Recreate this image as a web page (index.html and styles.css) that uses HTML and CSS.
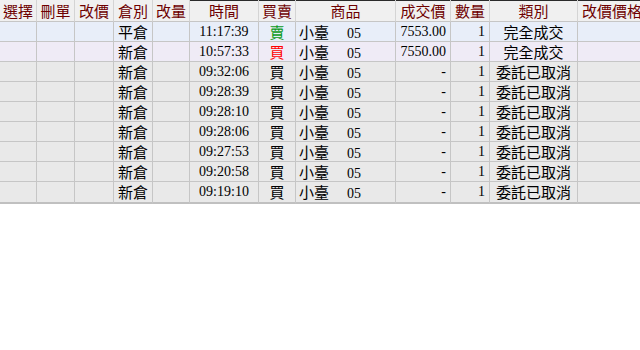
FILE: index.html
```html
<!DOCTYPE html>
<html lang="zh-Hant">
<head>
<meta charset="utf-8">
<title>委託回報</title>
<link rel="stylesheet" href="styles.css">
</head>
<body>
<div class="grid">
  <div class="row head">
    <div class="c">選擇</div><div class="c">刪單</div><div class="c">改價</div><div class="c">倉別</div><div class="c">改量</div>
    <div class="c dark">時間</div><div class="c dark">買賣</div><div class="c dark">商品</div><div class="c dark">成交價</div><div class="c dark">數量</div><div class="c dark">類別</div><div class="c dark left">改價價格</div>
  </div>
  <div class="row r-blue">
    <div class="c"></div><div class="c"></div><div class="c"></div><div class="c">平倉</div><div class="c"></div>
    <div class="c num">11:17:39</div><div class="c sell">賣</div><div class="c prod"><span class="pn">小臺</span><span class="num">05</span></div><div class="c num right">7553.00</div><div class="c num right">1</div><div class="c">完全成交</div><div class="c"></div>
  </div>
  <div class="row r-lav">
    <div class="c"></div><div class="c"></div><div class="c"></div><div class="c">新倉</div><div class="c"></div>
    <div class="c num">10:57:33</div><div class="c buy">買</div><div class="c prod"><span class="pn">小臺</span><span class="num">05</span></div><div class="c num right">7550.00</div><div class="c num right">1</div><div class="c">完全成交</div><div class="c"></div>
  </div>
  <div class="row">
    <div class="c"></div><div class="c"></div><div class="c"></div><div class="c">新倉</div><div class="c"></div>
    <div class="c num">09:32:06</div><div class="c">買</div><div class="c prod"><span class="pn">小臺</span><span class="num">05</span></div><div class="c num right">-</div><div class="c num right">1</div><div class="c">委託已取消</div><div class="c"></div>
  </div>
  <div class="row">
    <div class="c"></div><div class="c"></div><div class="c"></div><div class="c">新倉</div><div class="c"></div>
    <div class="c num">09:28:39</div><div class="c">買</div><div class="c prod"><span class="pn">小臺</span><span class="num">05</span></div><div class="c num right">-</div><div class="c num right">1</div><div class="c">委託已取消</div><div class="c"></div>
  </div>
  <div class="row">
    <div class="c"></div><div class="c"></div><div class="c"></div><div class="c">新倉</div><div class="c"></div>
    <div class="c num">09:28:10</div><div class="c">買</div><div class="c prod"><span class="pn">小臺</span><span class="num">05</span></div><div class="c num right">-</div><div class="c num right">1</div><div class="c">委託已取消</div><div class="c"></div>
  </div>
  <div class="row">
    <div class="c"></div><div class="c"></div><div class="c"></div><div class="c">新倉</div><div class="c"></div>
    <div class="c num">09:28:06</div><div class="c">買</div><div class="c prod"><span class="pn">小臺</span><span class="num">05</span></div><div class="c num right">-</div><div class="c num right">1</div><div class="c">委託已取消</div><div class="c"></div>
  </div>
  <div class="row">
    <div class="c"></div><div class="c"></div><div class="c"></div><div class="c">新倉</div><div class="c"></div>
    <div class="c num">09:27:53</div><div class="c">買</div><div class="c prod"><span class="pn">小臺</span><span class="num">05</span></div><div class="c num right">-</div><div class="c num right">1</div><div class="c">委託已取消</div><div class="c"></div>
  </div>
  <div class="row">
    <div class="c"></div><div class="c"></div><div class="c"></div><div class="c">新倉</div><div class="c"></div>
    <div class="c num">09:20:58</div><div class="c">買</div><div class="c prod"><span class="pn">小臺</span><span class="num">05</span></div><div class="c num right">-</div><div class="c num right">1</div><div class="c">委託已取消</div><div class="c"></div>
  </div>
  <div class="row last">
    <div class="c"></div><div class="c"></div><div class="c"></div><div class="c">新倉</div><div class="c"></div>
    <div class="c num">09:19:10</div><div class="c">買</div><div class="c prod"><span class="pn">小臺</span><span class="num">05</span></div><div class="c num right">-</div><div class="c num right">1</div><div class="c">委託已取消</div><div class="c"></div>
  </div>
</div>
</body>
</html>
```
FILE: styles.css
```css
html, body {
  margin: 0;
  padding: 0;
  background: #ffffff;
  overflow: hidden;
}
body {
  width: 640px;
  height: 350px;
  font-family: "Liberation Serif", "Noto Sans CJK TC", serif;
  font-size: 15px;
  color: #000;
}
.grid {
  width: 660px;
}
.row {
  display: grid;
  grid-template-columns: 37px 38px 39px 39px 37px 69px 37px 100px 55px 39px 88px 82px;
  height: 20px;
  background: #e9e9e9;
}
.c {
  box-sizing: border-box;
  border-right: 1px solid #c6c6c6;
  border-bottom: 1px solid #c6c6c6;
  line-height: 19px;
  text-align: center;
  white-space: nowrap;
  overflow: hidden;
  font-family: "Noto Sans CJK TC", sans-serif;
}
.num {
  font-family: "Liberation Serif", serif;
  font-size: 14px;
}
.right {
  text-align: right;
  padding-right: 4px;
}
.left {
  text-align: left;
  padding-left: 4px;
}
.prod {
  text-align: left;
  padding-left: 3px;
}
.pn {
  display: inline-block;
  width: 48px;
  font-family: "Noto Sans CJK TC", sans-serif;
  font-size: 15px;
}
.head {
  height: 22px;
  background: #f0f0f0;
}
.head .c {
  color: #6e0000;
  line-height: 21px;
  border-right: 1px solid #d4d4d4;
  border-bottom: 1px solid #c6c6c6;
}
.head .dark {
  box-shadow: inset 0 1px 0 #2a2a2a;
}
.r-blue { background: #e8eef9; }
.r-lav { background: #efebf6; }
.sell { color: #0a9a1a; }
.buy { color: #ff0000; }
.last {
  height: 22px;
}
.last .c {
  line-height: 19px;
  border-bottom: 2px solid #c0c0c0;
  padding-bottom: 1px;
}
.last .c.right { padding-bottom: 1px; }
```
